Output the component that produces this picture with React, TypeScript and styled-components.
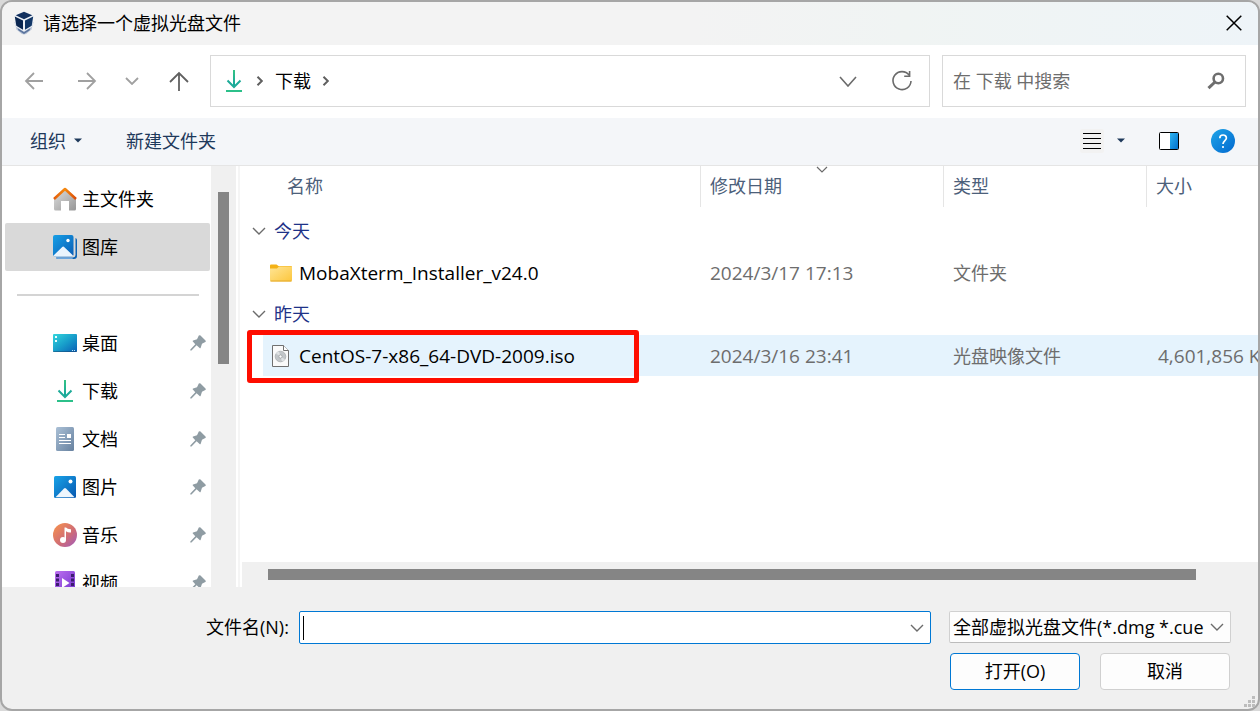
import React from "react";
import styled, { createGlobalStyle } from "styled-components";

const GlobalStyle = createGlobalStyle`
  * { box-sizing: border-box; }
  body {
    margin: 0;
    background: #d9d9d9;
    color: #000;
    font: 18px/24px "Open Sans", "Noto Sans CJK SC", sans-serif;
  }
  button, input, select { font: inherit; color: inherit; }
  svg { display: block; flex: none; }
`;

const Dialog = styled.div`
  display: flex;
  flex-direction: column;
  height: 100vh;
  border: 2px solid #a6a6a6;
  border-radius: 12px;
  background: #f0f0f0;
  overflow: hidden;
`;

const TitleBar = styled.header`
  display: flex;
  align-items: center;
  flex: none;
  height: 43px;
  padding: 0 3px 2px 12px;
  background: linear-gradient(90deg, #f3f3f3 55%, #f0f4f3 72%, #eef4f8);
`;

const Title = styled.h1`
  flex: 1;
  margin: 0 0 0 9px;
  font-size: 18px;
  font-weight: 400;
`;

const IconButton = styled.button<{ $width: number }>`
  display: flex;
  align-items: center;
  justify-content: center;
  flex: none;
  width: ${(p) => p.$width}px;
  height: 36px;
  padding: 0;
  border: 0;
  background: none;
`;

const NavBar = styled.nav`
  display: flex;
  align-items: center;
  flex: none;
  padding: 10px 12px 11px 5px;
  background: #fff;
`;

const AddressBar = styled.div`
  display: flex;
  align-items: center;
  flex: 1;
  min-width: 0;
  height: 52px;
  margin: 0 12px 0 3px;
  padding: 0 0 0 12px;
  border: 1px solid #d9d9d9;
`;

const CrumbGap = styled.span`
  display: flex;
  justify-content: center;
  width: 30px;
`;

const Crumb = styled.a`
  color: #000;
  text-decoration: none;
`;

const Fill = styled.div`
  flex: 1;
`;

const SearchBox = styled.label`
  display: flex;
  align-items: center;
  width: 304px;
  height: 52px;
  padding: 0 20px 0 10px;
  border: 1px solid #d9d9d9;
`;

const SearchInput = styled.input`
  flex: 1;
  min-width: 0;
  padding: 0;
  border: 0;
  outline: 0;
  background: none;
  &::placeholder { color: #6d6d6d; opacity: 1; }
`;

const Toolbar = styled.div`
  display: flex;
  align-items: center;
  flex: none;
  height: 48px;
  padding: 0 15px 2px 22px;
  border-bottom: 1px solid #e5e5e5;
  background: #f4f6f9;
`;

const ToolButton = styled.button`
  display: flex;
  align-items: center;
  gap: 8px;
  margin-right: 32px;
  padding: 6px;
  border: 0;
  background: none;
  color: #1e395b;
`;

const Body = styled.div`
  display: flex;
  flex: 1;
  min-height: 0;
  background: #fff;
`;

const Sidebar = styled.aside`
  flex: none;
  width: 209px;
  padding: 9px 1px 0 3px;
  overflow: hidden;
`;

const SideList = styled.ul`
  margin: 0;
  padding: 0;
  list-style: none;
`;

const SideItem = styled.a<{ $selected?: boolean }>`
  display: flex;
  align-items: center;
  gap: 5px;
  height: 48px;
  padding: 0 4px 0 48px;
  border-radius: 2px;
  background: ${(p) => (p.$selected ? "#d9d9d9" : "transparent")};
  color: #000;
  text-decoration: none;
`;

const SideLabel = styled.span`
  flex: 1;
`;

const Separator = styled.hr`
  height: 2px;
  margin: 23px 11px 23px 12px;
  border: 0;
  background: #d4d4d4;
`;

const VerticalTrack = styled.div`
  flex: none;
  width: 25px;
  padding: 26px 7px 0;
  background: #f0f0f0;
`;

const VerticalThumb = styled.div`
  height: 172px;
  background: #858585;
`;

const Splitter = styled.div`
  flex: none;
  width: 6px;
  border: solid #fff;
  border-width: 0 2px;
  background: #f5f5f5;
`;

const FilePane = styled.main`
  display: flex;
  flex-direction: column;
  flex: 1;
  min-width: 0;
`;

const TableArea = styled.div`
  flex: 1;
  min-height: 0;
  overflow: hidden;
`;

const FileTable = styled.table`
  width: 1118px;
  table-layout: fixed;
  border-collapse: collapse;
`;

const HeadCell = styled.th<{ $width: number }>`
  position: relative;
  width: ${(p) => p.$width}px;
  height: 44px;
  padding: 0;
  font-weight: 400;
  text-align: left;
  vertical-align: top;
  color: #4c607a;
`;

const HeadLabel = styled.div<{ $first?: boolean }>`
  height: 41px;
  padding: 8px 0 0 ${(p) => (p.$first ? 45 : 9)}px;
  border-left: ${(p) => (p.$first ? "0" : "1px solid #e5e5e5")};
`;

const SortMark = styled.span`
  position: absolute;
  top: 0;
  left: 50%;
  transform: translateX(-50%);
`;

const GroupCell = styled.th`
  height: 42px;
  padding: 0 0 0 10px;
  font-weight: 400;
  text-align: left;
  color: #1e3287;
`;

const GroupLabel = styled.div`
  display: flex;
  align-items: center;
  gap: 8px;
`;

const FileRow = styled.tr<{ $active?: boolean }>`
  --row: ${(p) => (p.$active ? "#e5f3fd" : "#fff")};
`;

const NameCell = styled.td`
  padding: 0 0 0 21px;
`;

const NameContent = styled.div`
  display: flex;
  align-items: center;
  gap: 6px;
  position: relative;
  height: 41px;
  padding-left: 6px;
  background: var(--row);
  font-size: 19px;
`;

const Highlight = styled.div`
  position: absolute;
  top: -5px;
  left: -16px;
  width: 392px;
  height: 53px;
  border: 5px solid #fe0d00;
  border-radius: 3px;
`;

const DataCell = styled.td<{ $numeric?: boolean }>`
  height: 41px;
  padding: 0 0 0 ${(p) => (p.$numeric ? 12 : 10)}px;
  background: var(--row);
  color: #6d6d6d;
  font-size: ${(p) => (p.$numeric ? 19 : 18)}px;
  white-space: nowrap;
`;

const DateCell = styled(DataCell)`
  font-size: 19px;
`;

const HorizontalTrack = styled.div`
  flex: none;
  height: 25px;
  padding: 7px 62px 7px 26px;
  background: #f0f0f0;
`;

const HorizontalThumb = styled.div`
  height: 11px;
  background: #858585;
`;

const Footer = styled.footer`
  position: relative;
  flex: none;
  display: flex;
  flex-direction: column;
  gap: 9px;
  padding: 24px 27px 19px 204px;
`;

const FooterRow = styled.div`
  display: flex;
  align-items: flex-start;
`;

const FileNameLabel = styled.label`
  flex: none;
  width: 93px;
  line-height: 32px;
  white-space: nowrap;
`;

const ComboBox = styled.div`
  display: flex;
  align-items: center;
  flex: 1;
  min-width: 0;
  height: 33px;
  padding: 0 6px 0 3px;
  border: 1px solid #0078d4;
  border-radius: 2px;
  background: #fff;
`;

const Caret = styled.span`
  width: 1px;
  height: 24px;
  background: #000;
`;

const FileNameInput = styled.input`
  flex: 1;
  min-width: 0;
  height: 24px;
  padding: 0;
  border: 0;
  outline: 0;
  background: none;
`;

const FilterBox = styled.div`
  position: relative;
  flex: none;
  width: 282px;
  margin-left: 18px;
`;

const FilterSelect = styled.select`
  display: block;
  width: 100%;
  height: 32px;
  padding: 0 25px 0 3px;
  border: 1px solid #d0d0d0;
  border-bottom-color: #bcbcbc;
  border-radius: 2px;
  background: #fdfdfd;
  appearance: none;
  text-overflow: clip;
`;

const SelectChevron = styled.span`
  position: absolute;
  top: 12px;
  right: 7px;
  pointer-events: none;
`;

const Actions = styled.div`
  display: flex;
  justify-content: flex-end;
  gap: 20px;
  padding-right: 1px;
`;

const ActionButton = styled.button<{ $primary?: boolean }>`
  width: 130px;
  height: 37px;
  padding: 0 0 2px;
  border: 1px solid ${(p) => (p.$primary ? "#0078d4" : "#d0d0d0")};
  border-radius: 4px;
  background: #fdfdfd;
`;

const Grip = styled.span`
  position: absolute;
  right: 3px;
  bottom: 2px;
`;

function Chevron({ w = 14, h = 8, color = "#6b6b6b", stroke = 1.4 }) {
  return (
    <svg width={w} height={h} viewBox={`0 0 ${w} ${h}`} fill="none" stroke={color} strokeWidth={stroke}>
      <path d={`M1 1 L${w / 2} ${h - 1} L${w - 1} 1`} />
    </svg>
  );
}

function CrumbChevron() {
  return (
    <svg width="8" height="12" viewBox="0 0 8 12" fill="none" stroke="#606060" strokeWidth="2">
      <path d="M1.5 1.8 L5.8 6 L1.5 10.2" />
    </svg>
  );
}

function SmallCaret() {
  return (
    <svg width="8" height="5" viewBox="0 0 8 5">
      <path d="M0 0.5H8L4 4.6Z" fill="#1e395b" />
    </svg>
  );
}

function BoxLogo() {
  return (
    <svg width="20" height="24" viewBox="0 0 20 24">
      <path d="M0.500 11L2.500 18.500L7.500 22.800Q10 24 12.500 22.800L17.500 18.500L19.500 11Z" fill="#b9c4d6" />
      <path d="M3.500 17L10 21L16.500 17L15.500 19.500L10 23L4.500 19.500Z" fill="#5c759e" />
      <path d="M10 0.300L19.600 4.500L18.300 15.500L10 20.500L1.700 15.500L0.400 4.500Z" fill="#eef2f7" />
      <path d="M10 0.800L18.300 4.300L10 8.200L1.700 4.300Z" fill="#12305e" />
      <path d="M0.800 5.600L9 9.600V18.800L2.300 14.800Z" fill="#0a2650" />
      <path d="M19.200 5.600L11 9.600V18.800L17.700 14.800Z" fill="#123767" />
    </svg>
  );
}

function ArrowIcon({ dir }: { dir: "left" | "right" | "up" }) {
  const d = {
    left: "M19 10H2M10 2L2 10L10 18",
    right: "M1 10H18M10 2L18 10L10 18",
    up: "M10 20V2M1 11L10 2L19 11",
  }[dir];
  return (
    <svg width="20" height="20" viewBox="0 0 20 20" fill="none" stroke={dir === "up" ? "#606060" : "#a0a0a0"} strokeWidth="1.8">
      <path d={d} />
    </svg>
  );
}

function DownloadIcon({ size }: { size: number }) {
  const id = `dl${size}`;
  return (
    <svg width={size} height="24" viewBox={`${(24 - size) / 2} 0 ${size} 24`} fill="none">
      <defs>
        <linearGradient id={id} x1="0" y1="0" x2="0" y2="1">
          <stop offset="0" stopColor="#35c384" />
          <stop offset="1" stopColor="#12a3a0" />
        </linearGradient>
      </defs>
      <path d="M11 1H13V18H11Z" fill={`url(#${id})`} />
      <path d="M5.500 11.500L12 18L18.500 11.500" stroke="#1dab98" strokeWidth="2" />
      <path d="M4 22H20" stroke="#2cc08a" strokeWidth="2" />
    </svg>
  );
}

function RefreshIcon() {
  return (
    <svg width="22" height="22" viewBox="0 0 22 22" fill="none" stroke="#6b6b6b" strokeWidth="1.6">
      <path d="M18.200 5.200A9 9 0 1 0 20 11" />
      <path d="M18.600 1V6.300H13.200" />
    </svg>
  );
}

function SearchIcon() {
  return (
    <svg width="18" height="18" viewBox="0 0 18 18" fill="none" stroke="#6e6e6e">
      <circle cx="11.300" cy="6.500" r="4.700" strokeWidth="2.600" />
      <path d="M8 10L1.500 16.200" strokeWidth="3" />
    </svg>
  );
}

function CloseIcon() {
  return (
    <svg width="16" height="16" viewBox="0 0 16 16" stroke="#000" strokeWidth="1.5">
      <path d="M0.700 0.700L15.300 15.300M15.300 0.700L0.700 15.300" />
    </svg>
  );
}

function ListIcon() {
  return (
    <svg width="24" height="24" viewBox="0 0 24 24">
      <rect width="24" height="24" rx="2" fill="#f2f2f2" />
      <path d="M3 4.500H21M3 9.500H21M3 14.500H21M3 19.500H21" stroke="#000" strokeWidth="1.200" />
    </svg>
  );
}

function PreviewIcon() {
  return (
    <svg width="20" height="18" viewBox="0 0 20 18">
      <defs>
        <linearGradient id="pane" x1="0" y1="0" x2="1" y2="1">
          <stop offset="0" stopColor="#2fb4f0" />
          <stop offset="1" stopColor="#0070cf" />
        </linearGradient>
      </defs>
      <rect x="0.500" y="0.500" width="19" height="17" rx="1" fill="#fff" stroke="#000" />
      <rect x="11" y="1" width="8" height="16" fill="url(#pane)" />
    </svg>
  );
}

function HelpIcon() {
  return (
    <svg width="24" height="24" viewBox="0 0 24 24">
      <defs>
        <linearGradient id="help" x1="0" y1="0" x2="1" y2="1">
          <stop offset="0" stopColor="#1fa5e8" />
          <stop offset="1" stopColor="#0268cf" />
        </linearGradient>
      </defs>
      <circle cx="12" cy="12" r="12" fill="url(#help)" />
      <path d="M8.800 9.200C8.800 5 15.400 5 15.400 9C15.400 11.600 12 11.600 12 15" fill="none" stroke="#fff" strokeWidth="1.700" />
      <circle cx="12" cy="18" r="1.100" fill="#fff" />
    </svg>
  );
}

function HomeIcon() {
  return (
    <svg width="24" height="24" viewBox="0 0 24 24">
      <defs>
        <linearGradient id="wall" x1="0" y1="0" x2="1" y2="1">
          <stop offset="0" stopColor="#dedede" />
          <stop offset="1" stopColor="#969696" />
        </linearGradient>
        <linearGradient id="roof" x1="0" y1="0" x2="1" y2="0">
          <stop offset="0" stopColor="#e35c0a" />
          <stop offset="0.5" stopColor="#f58a10" />
          <stop offset="1" stopColor="#d94a08" />
        </linearGradient>
      </defs>
      <path d="M1 12L12 2.500L23 12V22Q23 23.500 21.500 23.500H16V14H8V23.500H2.500Q1 23.500 1 22Z" fill="url(#wall)" />
      <path d="M1 12L12 2L23 12" fill="none" stroke="url(#roof)" strokeWidth="2.600" strokeLinejoin="round" />
    </svg>
  );
}

function GalleryIcon() {
  return (
    <svg width="24" height="24" viewBox="0 0 24 24">
      <defs>
        <linearGradient id="gal" x1="0" y1="0" x2="1" y2="1">
          <stop offset="0" stopColor="#17a0e6" />
          <stop offset="1" stopColor="#0a5cb5" />
        </linearGradient>
      </defs>
      <path d="M22.500 3Q24 3.400 24 5V21Q24 24 21 24H5Q3.400 24 3 22.500H20Q22.500 22 22.500 20Z" fill="#0c63b4" />
      <path d="M3 22.500H19L20 24H5Q3.500 24 3 22.500Z" fill="#6ba6de" />
      <rect width="20.500" height="21.500" rx="2" fill="url(#gal)" />
      <path d="M0.500 20.500L9 12.200Q10.200 11 11.400 12.200L20 20.500Q19.500 21.500 18.500 21.500H2Q1 21.500 0.500 20.500Z" fill="#eaf4fd" />
      <circle cx="15" cy="5.500" r="1.700" fill="#fff" />
    </svg>
  );
}

function DesktopIcon() {
  return (
    <svg width="24" height="24" viewBox="0 0 24 24">
      <defs>
        <linearGradient id="desk" x1="0" y1="0" x2="1" y2="1">
          <stop offset="0" stopColor="#33d6dc" />
          <stop offset="0.5" stopColor="#189fcb" />
          <stop offset="1" stopColor="#0a5fb5" />
        </linearGradient>
      </defs>
      <rect y="3" width="24" height="18" rx="1" fill="url(#desk)" />
      <path d="M2 5H4V7H2ZM2 9H4V11H2Z" fill="#eaffff" />
      <path d="M19 19H20V20H19ZM21 19H22V20H21Z" fill="#bfe3f7" />
      <path d="M0 20.500H24" stroke="#17365c" opacity="0.400" />
    </svg>
  );
}

function DocumentIcon() {
  return (
    <svg width="24" height="24" viewBox="0 0 24 24">
      <defs>
        <linearGradient id="doc" x1="0" y1="0" x2="1" y2="1">
          <stop offset="0" stopColor="#aac0d6" />
          <stop offset="1" stopColor="#67819f" />
        </linearGradient>
      </defs>
      <rect x="3" width="18" height="24" rx="1.500" fill="url(#doc)" />
      <path d="M6 7.500H12M6 10.500H12M6 13.500H18M6 16.500H18" stroke="#fff" />
      <rect x="14" y="7" width="4" height="4" fill="#fff" />
    </svg>
  );
}

function PictureIcon() {
  return (
    <svg width="24" height="24" viewBox="0 0 24 24">
      <defs>
        <linearGradient id="pic" x1="0" y1="0" x2="1" y2="1">
          <stop offset="0" stopColor="#18a3e8" />
          <stop offset="1" stopColor="#0858b0" />
        </linearGradient>
      </defs>
      <rect x="1" y="1" width="22" height="22" rx="1.500" fill="url(#pic)" />
      <path d="M2.500 22.200L11 13.500Q12 12.500 13 13.500L21.500 22.200Z" fill="#eef6fd" />
      <circle cx="17.500" cy="6.500" r="2" fill="#fff" />
    </svg>
  );
}

function MusicIcon() {
  return (
    <svg width="24" height="24" viewBox="0 0 24 24">
      <defs>
        <linearGradient id="mus" x1="0.100" y1="0.100" x2="0.900" y2="0.900">
          <stop offset="0" stopColor="#f28d52" />
          <stop offset="0.600" stopColor="#cf6c76" />
          <stop offset="1" stopColor="#ab5fae" />
        </linearGradient>
      </defs>
      <circle cx="12" cy="12" r="12" fill="url(#mus)" />
      <circle cx="10" cy="17" r="3" fill="#fff" />
      <path d="M11.500 4.500H13Q14.500 6.500 18 6.300V9.500Q15 9.800 13 8.300V17H11.500Z" fill="#fff" />
    </svg>
  );
}

function VideoIcon() {
  return (
    <svg width="24" height="24" viewBox="0 0 24 24">
      <defs>
        <linearGradient id="vid" x1="0" y1="0" x2="1" y2="1">
          <stop offset="0" stopColor="#bd70f0" />
          <stop offset="1" stopColor="#7133cc" />
        </linearGradient>
      </defs>
      <rect x="2" width="20" height="23" rx="1.500" fill="url(#vid)" />
      <path d="M3 3H6V6H3ZM3 7.500H6V10.500H3ZM3 12H6V15H3ZM3 16.500H6V19.500H3ZM18 3H21V6H18ZM18 7.500H21V10.500H18ZM18 12H21V15H18ZM18 16.500H21V19.500H18Z" fill="#3d1d70" />
      <path d="M9 7L16.500 12L9 17Z" fill="#fff" />
    </svg>
  );
}

function PinIcon() {
  return (
    <svg width="16" height="16" viewBox="0 0 16 16">
      <path d="M8.800 0.600Q9.700 -0.200 10.500 0.600L15.500 5.500Q16.200 6.400 15.300 7L12 8.800L10.600 12.900Q10.200 13.600 9.600 13L6.600 10.300L1.500 15.500H0.300V14.400L5.300 9.200L2.800 6.500Q2.400 5.900 3.100 5.600L7 4.200Z" fill="#8f9ca3" />
    </svg>
  );
}

function FolderIcon() {
  return (
    <svg width="24" height="18" viewBox="0 0 24 18">
      <defs>
        <linearGradient id="fold" x1="0" y1="0" x2="1" y2="1">
          <stop offset="0" stopColor="#ffe596" />
          <stop offset="1" stopColor="#fcc63c" />
        </linearGradient>
      </defs>
      <path d="M1 1.500Q1 0.500 2 0.500H7.500L9.500 2H22Q23 2 23 3V8H1Z" fill="#f4b217" />
      <path d="M1 4.500H8L10 2.500H23V16Q23 17.500 21.500 17.500H2.500Q1 17.500 1 16Z" fill="url(#fold)" />
      <path d="M1.500 17H22.500" stroke="#e3a92c" />
    </svg>
  );
}

function DiscFileIcon() {
  return (
    <svg width="24" height="24" viewBox="0 0 24 24">
      <path d="M3.500 1.500H14.500L19.500 6.500V22.500H3.500Z" fill="#fafafa" stroke="#707070" />
      <path d="M14.500 1.500V6.500H19.500" fill="#fff" stroke="#707070" />
      <circle cx="11.500" cy="12.500" r="5.300" fill="#c2c6c9" stroke="#a9adb0" strokeWidth="0.800" />
      <path d="M11.500 12.500L7 9.500A5.300 5.300 0 0 1 10 7.400ZM11.500 12.500L16 15.500A5.300 5.300 0 0 1 13 17.600Z" fill="#dfe2e4" />
      <circle cx="11.500" cy="12.500" r="1.600" fill="#fff" stroke="#9a9ea1" strokeWidth="0.800" />
    </svg>
  );
}

function GripIcon() {
  return (
    <svg width="11" height="11" viewBox="0 0 11 11" fill="#bdbdbd">
      <path d="M8 0H11V3H8ZM4 4H7V7H4ZM8 4H11V7H8ZM0 8H3V11H0ZM4 8H7V11H4ZM8 8H11V11H8Z" />
    </svg>
  );
}

const topPlaces = [
  { name: "主文件夹", icon: <HomeIcon /> },
  { name: "图库", icon: <GalleryIcon />, selected: true },
];

const pinnedPlaces = [
  { name: "桌面", icon: <DesktopIcon /> },
  { name: "下载", icon: <DownloadIcon size={24} /> },
  { name: "文档", icon: <DocumentIcon /> },
  { name: "图片", icon: <PictureIcon /> },
  { name: "音乐", icon: <MusicIcon /> },
  { name: "视频", icon: <VideoIcon /> },
];

const groups = [
  {
    label: "今天",
    files: [{ name: "MobaXterm_Installer_v24.0", date: "2024/3/17 17:13", type: "文件夹", size: "", icon: <FolderIcon />, active: false }],
  },
  {
    label: "昨天",
    files: [{ name: "CentOS-7-x86_64-DVD-2009.iso", date: "2024/3/16 23:41", type: "光盘映像文件", size: "4,601,856 KB", icon: <DiscFileIcon />, active: true }],
  },
];

export default function App() {
  return (
    <>
      <GlobalStyle />
      <Dialog role="dialog" aria-labelledby="dialog-title">
        <TitleBar>
          <BoxLogo />
          <Title id="dialog-title">请选择一个虚拟光盘文件</Title>
          <IconButton $width={42} aria-label="关闭"><CloseIcon /></IconButton>
        </TitleBar>

        <NavBar>
          <IconButton $width={53} aria-label="后退"><ArrowIcon dir="left" /></IconButton>
          <IconButton $width={53} aria-label="前进"><ArrowIcon dir="right" /></IconButton>
          <IconButton $width={37} aria-label="最近位置"><Chevron color="#a0a0a0" stroke={1.8} /></IconButton>
          <IconButton $width={57} aria-label="向上"><ArrowIcon dir="up" /></IconButton>
          <AddressBar>
            <DownloadIcon size={22} />
            <CrumbGap><CrumbChevron /></CrumbGap>
            <Crumb href="#downloads">下载</Crumb>
            <CrumbGap><CrumbChevron /></CrumbGap>
            <Fill />
            <IconButton $width={54} aria-label="历史记录"><Chevron w={18} h={11} stroke={1.6} /></IconButton>
            <IconButton $width={54} aria-label="刷新"><RefreshIcon /></IconButton>
          </AddressBar>
          <SearchBox>
            <SearchInput type="text" placeholder="在 下载 中搜索" aria-label="搜索" />
            <SearchIcon />
          </SearchBox>
        </NavBar>

        <Toolbar>
          <ToolButton>组织<SmallCaret /></ToolButton>
          <ToolButton>新建文件夹</ToolButton>
          <Fill />
          <IconButton $width={30} aria-label="视图"><ListIcon /></IconButton>
          <IconButton $width={28} aria-label="更多选项"><SmallCaret /></IconButton>
          <IconButton $width={68} aria-label="预览窗格"><PreviewIcon /></IconButton>
          <IconButton $width={40} aria-label="帮助"><HelpIcon /></IconButton>
        </Toolbar>

        <Body>
          <Sidebar>
            <SideList>
              {topPlaces.map((p) => (
                <li key={p.name}>
                  <SideItem href="#place" $selected={p.selected}>
                    {p.icon}
                    <SideLabel>{p.name}</SideLabel>
                  </SideItem>
                </li>
              ))}
            </SideList>
            <Separator />
            <SideList>
              {pinnedPlaces.map((p) => (
                <li key={p.name}>
                  <SideItem href="#place">
                    {p.icon}
                    <SideLabel>{p.name}</SideLabel>
                    <PinIcon />
                  </SideItem>
                </li>
              ))}
            </SideList>
          </Sidebar>
          <VerticalTrack><VerticalThumb /></VerticalTrack>
          <Splitter />
          <FilePane>
            <TableArea>
              <FileTable>
                <thead>
                  <tr>
                    <HeadCell $width={458}><HeadLabel $first>名称</HeadLabel></HeadCell>
                    <HeadCell $width={243}>
                      <HeadLabel>修改日期</HeadLabel>
                      <SortMark><Chevron w={12} h={7} stroke={1.2} /></SortMark>
                    </HeadCell>
                    <HeadCell $width={203}><HeadLabel>类型</HeadLabel></HeadCell>
                    <HeadCell $width={214}><HeadLabel>大小</HeadLabel></HeadCell>
                  </tr>
                </thead>
                {groups.map((g) => (
                  <tbody key={g.label}>
                    <tr>
                      <GroupCell colSpan={4} scope="rowgroup">
                        <GroupLabel><Chevron />{g.label}</GroupLabel>
                      </GroupCell>
                    </tr>
                    {g.files.map((f) => (
                      <FileRow key={f.name} $active={f.active}>
                        <NameCell>
                          <NameContent>
                            {f.icon}
                            {f.name}
                            {f.active && <Highlight />}
                          </NameContent>
                        </NameCell>
                        <DateCell>{f.date}</DateCell>
                        <DataCell>{f.type}</DataCell>
                        <DataCell $numeric>{f.size}</DataCell>
                      </FileRow>
                    ))}
                  </tbody>
                ))}
              </FileTable>
            </TableArea>
            <HorizontalTrack><HorizontalThumb /></HorizontalTrack>
          </FilePane>
        </Body>

        <Footer>
          <FooterRow>
            <FileNameLabel htmlFor="file-name">文件名(N):</FileNameLabel>
            <ComboBox>
              <Caret />
              <FileNameInput id="file-name" type="text" />
              <Chevron />
            </ComboBox>
            <FilterBox>
              <FilterSelect aria-label="文件类型">
                <option>全部虚拟光盘文件(*.dmg *.cue</option>
              </FilterSelect>
              <SelectChevron><Chevron /></SelectChevron>
            </FilterBox>
          </FooterRow>
          <Actions>
            <ActionButton $primary>打开(O)</ActionButton>
            <ActionButton>取消</ActionButton>
          </Actions>
          <Grip><GripIcon /></Grip>
        </Footer>
      </Dialog>
    </>
  );
}
